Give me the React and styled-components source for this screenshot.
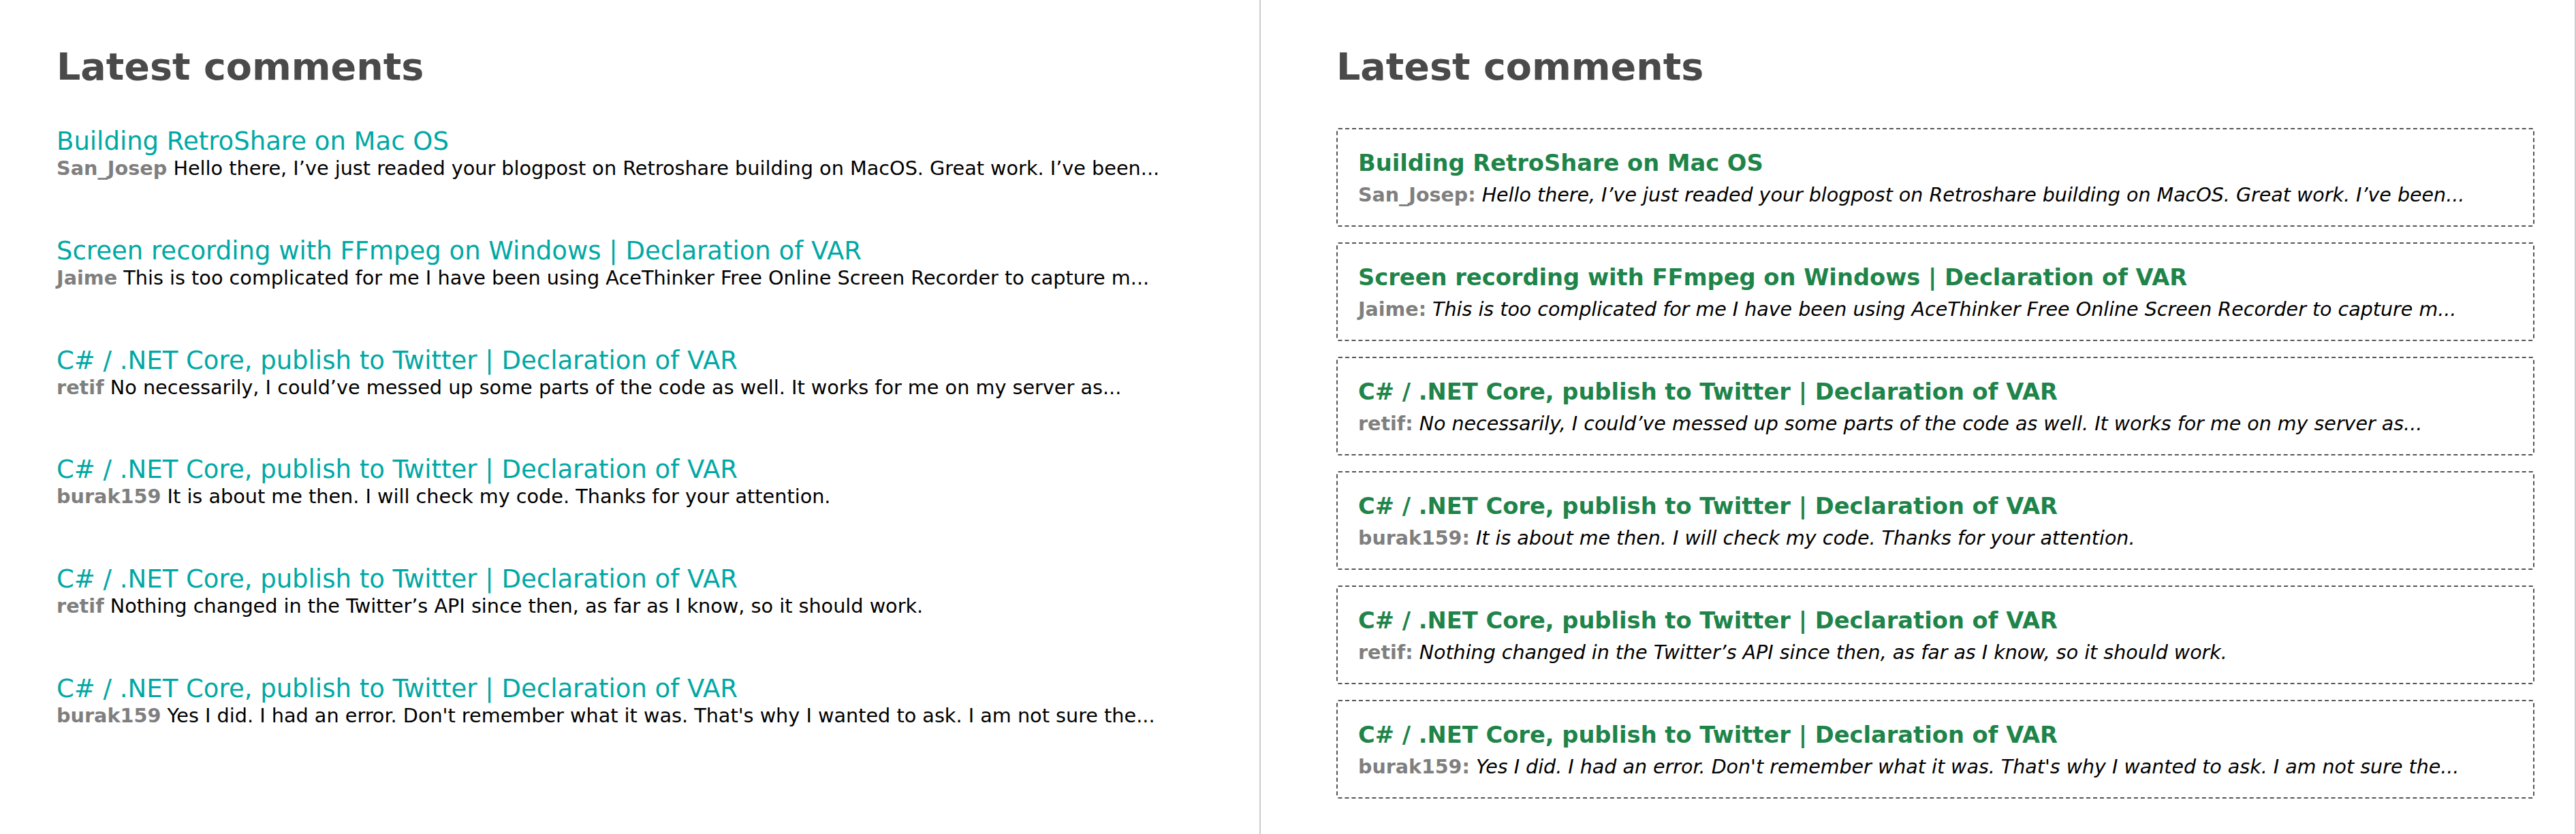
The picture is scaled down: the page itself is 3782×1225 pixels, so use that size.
import React from "react";
import styled, { createGlobalStyle } from "styled-components";

const Global = createGlobalStyle`
  html, body { margin: 0; padding: 0; background: #fff; }
  body { font-family: "DejaVu Sans", Verdana, sans-serif; }
`;

const comments = [
  { title: "Building RetroShare on Mac OS", author: "San_Josep", text: "Hello there, I\u2019ve just readed your blogpost on Retroshare building on MacOS. Great work. I\u2019ve been..." },
  { title: "Screen recording with FFmpeg on Windows | Declaration of VAR", author: "Jaime", text: "This is too complicated for me I have been using AceThinker Free Online Screen Recorder to capture m..." },
  { title: "C# / .NET Core, publish to Twitter | Declaration of VAR", author: "retif", text: "No necessarily, I could\u2019ve messed up some parts of the code as well. It works for me on my server as..." },
  { title: "C# / .NET Core, publish to Twitter | Declaration of VAR", author: "burak159", text: "It is about me then. I will check my code. Thanks for your attention." },
  { title: "C# / .NET Core, publish to Twitter | Declaration of VAR", author: "retif", text: "Nothing changed in the Twitter\u2019s API since then, as far as I know, so it should work." },
  { title: "C# / .NET Core, publish to Twitter | Declaration of VAR", author: "burak159", text: "Yes I did. I had an error. Don't remember what it was. That's why I wanted to ask. I am not sure the..." },
];

const Page = styled.div`
  display: flex;
  width: 3782px;
  height: 1225px;
  overflow: hidden;
`;

const Panel = styled.section`
  box-sizing: border-box;
  width: ${(p) => p.$width};
  flex: ${(p) => (p.$grow ? "1" : "none")};
  padding: 0 ${(p) => p.$right}px 0 ${(p) => p.$left}px;
  border-right: 2px solid #cccccc;
`;

const Heading = styled.h2`
  margin: 70px 0 0;
  font-size: 55.5px;
  line-height: 56px;
  font-weight: bold;
  color: #4a4a4a;
`;

const PlainList = styled.div`
  margin-top: 63px;
`;

const PlainItem = styled.div`
  margin-bottom: 81.8px;
`;

const PlainLink = styled.a`
  display: block;
  font-size: 37px;
  line-height: 37px;
  color: #00a8a5;
  text-decoration: none;
  white-space: nowrap;
`;

const PlainComment = styled.div`
  font-size: 28.7px;
  line-height: 42px;
  color: #000;
  white-space: nowrap;
`;

const Author = styled.b`
  color: #7f7f7f;
  font-weight: bold;
  font-style: normal;
`;

const BoxList = styled.div`
  display: flex;
  flex-direction: column;
  gap: 23px;
  margin-top: 62px;
`;

const Box = styled.div`
  box-sizing: border-box;
  height: 145px;
  border: 2px dashed #555555;
  border-radius: 3px;
  padding: 30px 28px 0 30px;
`;

const BoxTitle = styled.a`
  display: block;
  font-size: 33.7px;
  line-height: 40px;
  font-weight: bold;
  color: #1e8449;
  text-decoration: none;
  white-space: nowrap;
`;

const BoxComment = styled.div`
  margin-top: 9px;
  font-size: 28.5px;
  line-height: 36px;
  font-style: italic;
  color: #000;
  white-space: nowrap;
`;

export default function App() {
  return (
    <Page>
      <Global />
      <Panel $width="1851px" $left={83} $right={0}>
        <Heading>Latest comments</Heading>
        <PlainList>
          {comments.map((c, i) => (
            <PlainItem key={i}>
              <PlainLink href="#">{c.title}</PlainLink>
              <PlainComment>
                <Author>{c.author}</Author> {c.text}
              </PlainComment>
            </PlainItem>
          ))}
        </PlainList>
      </Panel>
      <Panel $grow $left={111} $right={59}>
        <Heading>Latest comments</Heading>
        <BoxList>
          {comments.map((c, i) => (
            <Box key={i}>
              <BoxTitle href="#">{c.title}</BoxTitle>
              <BoxComment>
                <Author>{c.author}:</Author> {c.text}
              </BoxComment>
            </Box>
          ))}
        </BoxList>
      </Panel>
    </Page>
  );
}
